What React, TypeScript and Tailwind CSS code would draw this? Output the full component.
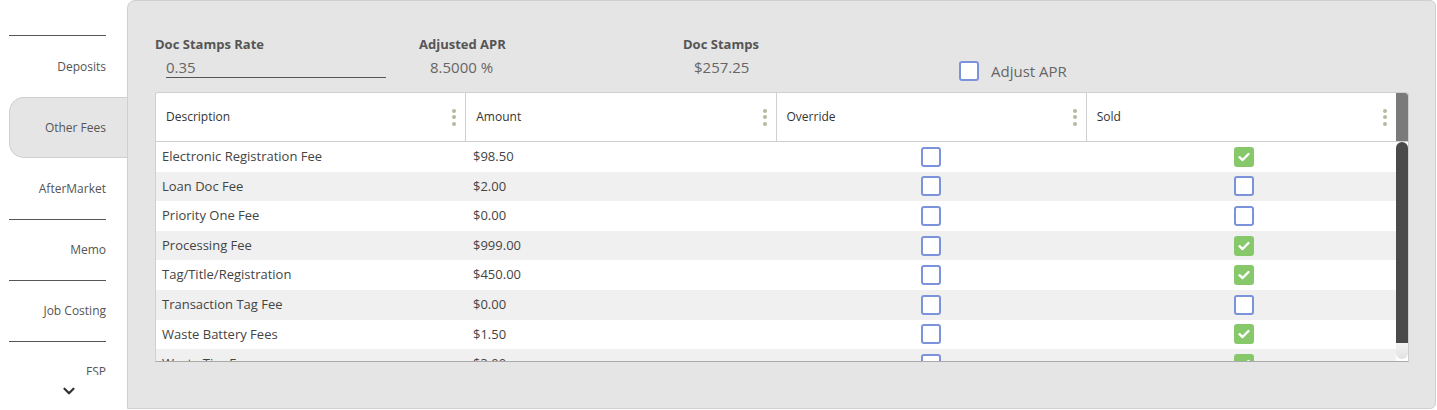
import React from "react";
import { ChevronDown } from "lucide-react";

const rows = [
  { d: "Electronic Registration Fee", a: "$98.50", o: false, s: true },
  { d: "Loan Doc Fee", a: "$2.00", o: false, s: false },
  { d: "Priority One Fee", a: "$0.00", o: false, s: false },
  { d: "Processing Fee", a: "$999.00", o: false, s: true },
  { d: "Tag/Title/Registration", a: "$450.00", o: false, s: true },
  { d: "Transaction Tag Fee", a: "$0.00", o: false, s: false },
  { d: "Waste Battery Fees", a: "$1.50", o: false, s: true },
  { d: "Waste Tire Fee", a: "$3.00", o: false, s: true },
];

function Box({ checked }: { checked: boolean }) {
  if (checked) {
    return (
      <div className="w-[20px] h-[20px] shrink-0 rounded-[3px] bg-[#87c96a] flex items-center justify-center">
        <svg width="14" height="14" viewBox="0 0 14 14">
          <path d="M2.5 7.2 L5.6 10 L11.5 4" fill="none" stroke="#fff" strokeWidth="2.4" strokeLinecap="round" strokeLinejoin="round" />
        </svg>
      </div>
    );
  }
  return <div className="w-[20px] h-[20px] shrink-0 rounded-[3px] border-2 border-[#7b93db] bg-white" />;
}

function Kebab() {
  return (
    <div className="flex flex-col gap-[2.5px]">
      <div className="w-[4px] h-[4px] rounded-full bg-[#b7b99f]" />
      <div className="w-[4px] h-[4px] rounded-full bg-[#b7b99f]" />
      <div className="w-[4px] h-[4px] rounded-full bg-[#b7b99f]" />
    </div>
  );
}

function HeaderCell({ label, last }: { label: string; last?: boolean }) {
  return (
    <div className={`flex-1 min-w-0 h-full flex items-center justify-between pl-[10px] pr-[9px] ${last ? "" : "border-r border-[#d0d0d0]"}`}>
      <span className="text-[12px] text-[#333]">{label}</span>
      <Kebab />
    </div>
  );
}

export default function App() {
  return (
    <div className="w-[1437px] h-[410px] flex bg-white font-['Open_Sans',sans-serif] overflow-hidden">
      {/* Left nav */}
      <div className="w-[127px] shrink-0 flex flex-col relative z-10">
        <div className="h-[375px] overflow-hidden pt-[35px] pl-[9px]">
          <div className="w-[97px] h-[62px] border-t border-[#555] flex items-center justify-end text-[12px] text-[#555]">Deposits</div>
          <div className="w-[119px] h-[61px] rounded-l-[15px] border border-r-0 border-[#cfcfcf] bg-[#e5e5e5] flex items-center justify-end pr-[22px] text-[12px] text-[#555]">Other Fees</div>
          <div className="w-[97px] h-[61px] flex items-center justify-end text-[12px] text-[#555]">AfterMarket</div>
          <div className="w-[97px] h-[61px] border-t border-[#555] flex items-center justify-end text-[12px] text-[#555]">Memo</div>
          <div className="w-[97px] h-[61px] border-t border-[#555] flex items-center justify-end text-[12px] text-[#555]">Job Costing</div>
          <div className="w-[97px] h-[61px] border-t border-[#555] flex items-center justify-end text-[12px] text-[#555]">FSP</div>
        </div>
        <div className="h-[35px] flex items-start justify-center pt-[7px] pl-[10px] bg-white">
          <ChevronDown size={18} strokeWidth={3} color="#333" />
        </div>
      </div>

      {/* Main panel */}
      <div className="flex-1 h-[409px] mr-[1px] border border-[#cfcfcf] rounded-tl-[8px] rounded-tr-[6px] rounded-br-[6px] bg-[#e5e5e5] pt-[35px] pl-[27px] pr-[26px]">
        <div className="flex items-start h-[55px]">
          <div className="w-[264px]">
            <div className="h-[16px] leading-[16px] text-[13px] font-bold text-[#555]">Doc Stamps Rate</div>
            <div className="mt-[5px] ml-[11px] w-[220px] h-[21px] border-b border-[#555] text-[15px] leading-[20px] text-[#666]">0.35</div>
          </div>
          <div className="w-[264px]">
            <div className="h-[16px] leading-[16px] text-[13px] font-bold text-[#555]">Adjusted APR</div>
            <div className="mt-[5px] ml-[11px] h-[20px] text-[15px] leading-[20px] text-[#666]">8.5000 %</div>
          </div>
          <div className="w-[276px]">
            <div className="h-[16px] leading-[16px] text-[13px] font-bold text-[#555]">Doc Stamps</div>
            <div className="mt-[5px] ml-[11px] h-[20px] text-[15px] leading-[20px] text-[#666]">$257.25</div>
          </div>
          <div className="mt-[24px] flex items-center gap-[12px]">
            <Box checked={false} />
            <span className="text-[15px] text-[#666]">Adjust APR</span>
          </div>
        </div>

        {/* Table */}
        <div className="w-[1254px] h-[270px] mt-[1px] border border-[#cfcfcf] border-b-[#aaa] rounded-t-[3px] bg-white flex flex-col overflow-hidden">
          <div className="h-[49px] shrink-0 flex border-b border-[#cfcfcf]">
            <HeaderCell label="Description" />
            <HeaderCell label="Amount" />
            <HeaderCell label="Override" />
            <HeaderCell label="Sold" last />
            <div className="w-[12px] h-full bg-[#7a7a7a] rounded-tr-[3px]" />
          </div>
          <div className="flex-1 flex overflow-hidden">
            <div className="flex-1 overflow-hidden">
              {rows.map((r, i) => (
                <div key={i} className={`h-[29.6px] flex items-center ${i % 2 === 1 ? "bg-[#f0f0f0]" : "bg-white"}`}>
                  <div className="flex-1 min-w-0 pl-[6px] text-[13px] text-[#444]">{r.d}</div>
                  <div className="flex-1 min-w-0 pl-[6px] text-[13px] text-[#444]">{r.a}</div>
                  <div className="flex-1 min-w-0 flex justify-center pr-[8px]"><Box checked={r.o} /></div>
                  <div className="flex-1 min-w-0 flex justify-center"><Box checked={r.s} /></div>
                </div>
              ))}
            </div>
            <div className="w-[12px] flex flex-col bg-white">
              <div className="h-[201px] bg-[#4a4a4a] rounded-t-full rounded-b-[6px]" />
              <div className="h-[16px] bg-gradient-to-b from-[#f4f4f4] to-[#e2e2e2] rounded-b-full" />
            </div>
          </div>
        </div>
      </div>
    </div>
  );
}
